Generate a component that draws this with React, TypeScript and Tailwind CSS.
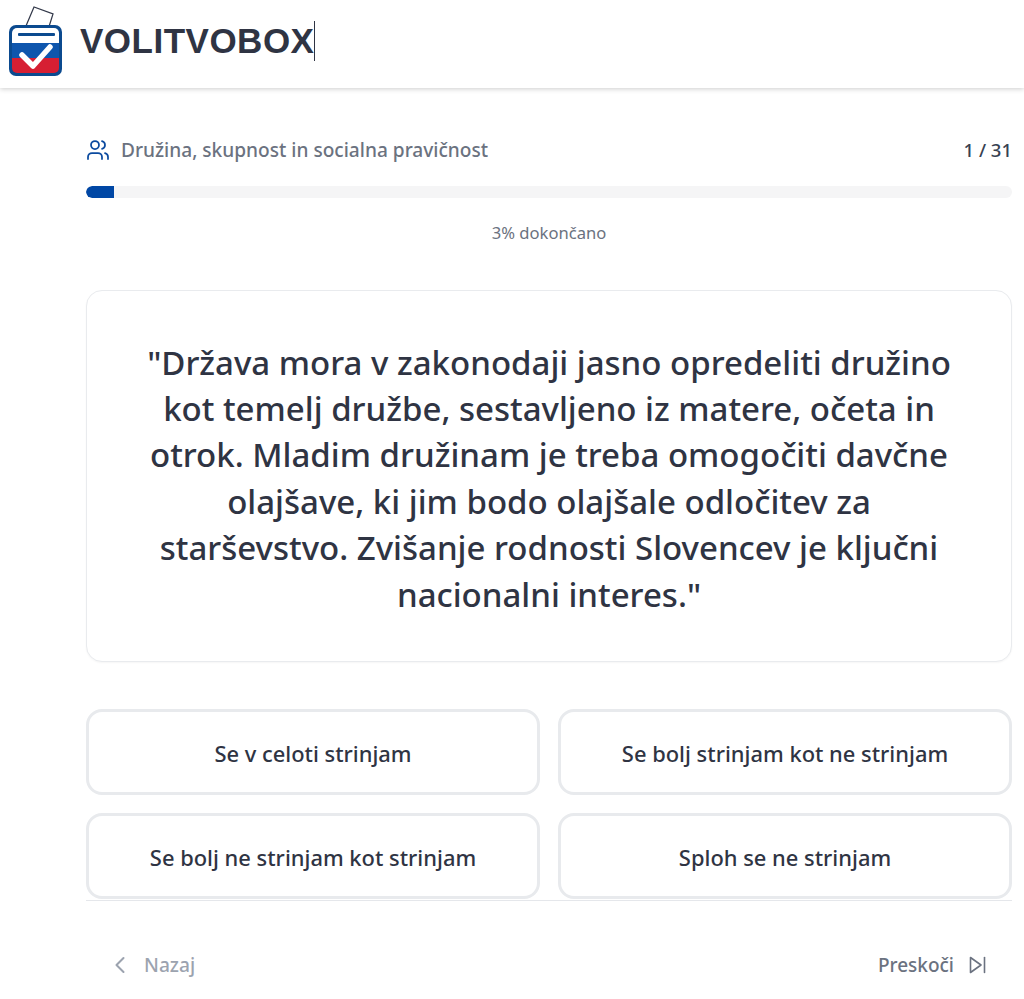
import { ChevronLeft, Users } from "lucide-react";

const answers = [
  "Se v celoti strinjam",
  "Se bolj strinjam kot ne strinjam",
  "Se bolj ne strinjam kot strinjam",
  "Sploh se ne strinjam",
];

function Logo() {
  return (
    <svg width="56" height="76" viewBox="0 0 56 76" className="shrink-0">
      <path d="M15 27 L26 1 L45 8 L39 27 Z" fill="#fff" stroke="#33394a" strokeWidth="1.25" />
      <rect x="1" y="19" width="53" height="51" rx="7" fill="#0b4a8f" />
      <path d="M4 27 a5 5 0 0 1 5 -5 H46 a5 5 0 0 1 5 5 V37 H4 Z" fill="#fff" />
      <rect x="4" y="37" width="47" height="15" fill="#0f56ad" />
      <path d="M4 52 H51 V62 a5 5 0 0 1 -5 5 H9 a5 5 0 0 1 -5 -5 Z" fill="#d61f33" />
      <rect x="10" y="27" width="37" height="3" rx="1" fill="#0b4a8f" />
      <path d="M14 49 L25 60 L42 41" fill="none" stroke="#fff" strokeWidth="5.5" strokeLinecap="round" strokeLinejoin="round" />
    </svg>
  );
}

export default function App() {
  return (
    <div className="min-h-[999px] bg-white font-['Noto_Sans','Open_Sans',sans-serif] overflow-hidden">
      <header className="h-[88px] bg-white shadow-[0_1px_5px_rgba(0,0,0,0.2)] flex items-center pl-2 gap-4">
        <Logo />
        <div className="flex items-center -mt-[6px]">
          <span className="font-['Liberation_Sans',sans-serif] font-bold text-[35px] tracking-[0.5px] text-[#2f3443]">
            VOLITVOBOX
          </span>
          <span className="w-px h-10 bg-[#2f3443]" />
        </div>
      </header>

      <main className="ml-[86px] mr-3 pt-[50px]">
        <div className="flex items-center justify-between h-6">
          <div className="flex items-center gap-[11px]">
            <Users className="w-6 h-6 text-[#0b4a9f]" strokeWidth={1.75} />
            <span className="text-[19.1px] font-medium text-[#6b7280]">
              Družina, skupnost in socialna pravičnost
            </span>
          </div>
          <span className="text-[18.5px] font-medium text-[#374151]">1 / 31</span>
        </div>

        <div className="mt-[24px] h-3 rounded-full bg-[#f5f5f6] overflow-hidden">
          <div className="h-full w-[28px] bg-[#0047a5] rounded-l-full" />
        </div>
        <p className="mt-[23px] text-center text-[16.6px] text-[#6b7280]">3% dokončano</p>

        <section className="mt-[44px] h-[372px] pt-[6px] rounded-2xl border border-[#e9ebee] bg-white shadow-[0_1px_2px_rgba(0,0,0,0.04)] flex items-center justify-center px-[48px]">
          <p className="text-center text-[33px] leading-[46.4px] font-medium text-[#2f3443]">
            "Država mora v zakonodaji jasno opredeliti družino kot temelj družbe, sestavljeno iz matere,
            očeta in otrok. Mladim družinam je treba omogočiti davčne olajšave, ki jim bodo olajšale
            odločitev za starševstvo. Zvišanje rodnosti Slovencev je ključni nacionalni interes."
          </p>
        </section>

        <div className="mt-[47px] grid grid-cols-2 gap-x-[18px] gap-y-[18px] pb-[1px] border-b border-[#e5e7eb]">
          {answers.map((a) => (
            <button
              key={a}
              className="h-[86px] pt-[5px] rounded-2xl border-[3px] border-[#e8eaed] bg-white text-[21.9px] font-medium text-[#2f3443]"
            >
              {a}
            </button>
          ))}
        </div>

        <div className="mt-[50px] flex items-center justify-between pl-[20px] pr-[25px]">
          <div className="flex items-center gap-[10px] text-[#9ca3af]">
            <ChevronLeft className="w-7 h-7" strokeWidth={1.75} />
            <span className="text-[19.2px] font-medium">Nazaj</span>
          </div>
          <div className="flex items-center gap-[15px] text-[#6b7280]">
            <span className="text-[19px] font-medium">Preskoči</span>
            <svg width="18" height="18" viewBox="0 0 18 18" fill="none" stroke="currentColor" strokeWidth="1.6" strokeLinejoin="round" strokeLinecap="round">
              <path d="M1.5 1.5 L12 9 L1.5 16.5 Z" />
              <path d="M15.5 1.5 V16.5" />
            </svg>
          </div>
        </div>
      </main>
    </div>
  );
}
